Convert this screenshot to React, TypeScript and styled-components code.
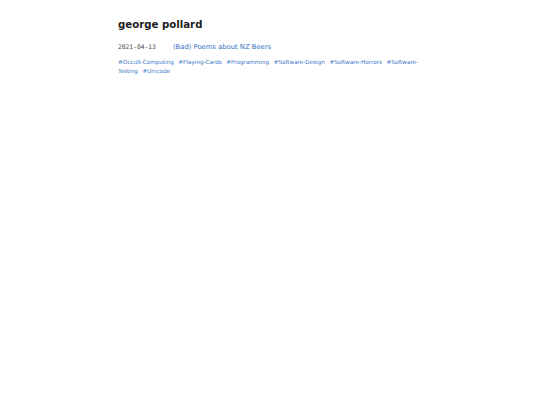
import React from 'react'
import styled, { createGlobalStyle } from 'styled-components'

const Global = createGlobalStyle`
  body {
    margin: 0;
    background: #fff;
    font-family: "DejaVu Sans", sans-serif;
    color: #222;
  }
`

const Page = styled.main`
  width: 304px;
  margin: 0 auto;
  padding-top: 19px;
`

const Title = styled.h1`
  font-size: 10.2px;
  line-height: 12px;
  font-weight: bold;
  margin: 0 0 12px;
  color: #1e1e1e;
`

const Post = styled.div`
  display: flex;
  align-items: baseline;
  gap: 17px;
  line-height: 8px;
  margin-bottom: 7px;
`

const Date = styled.span`
  font-family: "DejaVu Sans Mono", monospace;
  font-size: 6.3px;
  color: #444;
`

const PostLink = styled.a`
  font-size: 6.8px;
  color: #3470c4;
  text-decoration: none;
`

const Tags = styled.div`
  font-size: 5.65px;
  line-height: 9px;
`

const Tag = styled.a`
  color: #3a74c6;
  text-decoration: none;
  margin-right: 2.8px;
`

const tags = [
  'Occult-Computing',
  'Playing-Cards',
  'Programming',
  'Software-Design',
  'Software-Horrors',
  'Software-Testing',
  'Unicode',
]

export default function App() {
  return (
    <>
      <Global />
      <Page>
        <Title>george pollard</Title>
        <Post>
          <Date>2021-04-13</Date>
          <PostLink href="#">(Bad) Poems about NZ Beers</PostLink>
        </Post>
        <Tags>
          {tags.map(t => (
            <React.Fragment key={t}>
              <Tag href="#">#{t}</Tag>{' '}
            </React.Fragment>
          ))}
        </Tags>
      </Page>
    </>
  )
}
